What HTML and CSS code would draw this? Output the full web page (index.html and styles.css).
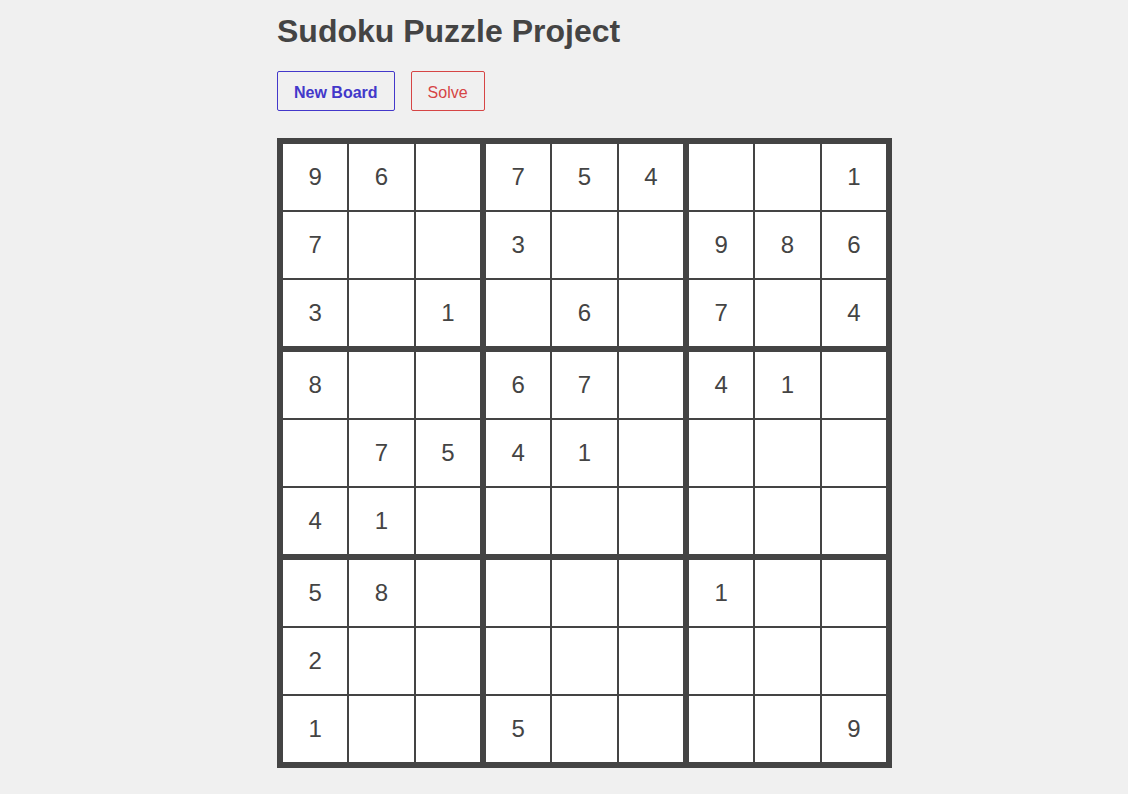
FILE: index.html
```html
<!DOCTYPE html>
<html>
<head>
<meta charset="utf-8">
<title>Sudoku Puzzle Project</title>
<link rel="stylesheet" href="styles.css">
</head>
<body>
<div class="app">
  <h1 class="title">Sudoku Puzzle Project</h1>
  <div class="controls">
    <button class="btn btn-new">New Board</button>
    <button class="btn btn-solve">Solve</button>
  </div>
  <div class="board">
    <div class="block"><div class="cell">9</div><div class="cell">6</div><div class="cell"></div><div class="cell">7</div><div class="cell"></div><div class="cell"></div><div class="cell">3</div><div class="cell"></div><div class="cell">1</div></div>
    <div class="block"><div class="cell">7</div><div class="cell">5</div><div class="cell">4</div><div class="cell">3</div><div class="cell"></div><div class="cell"></div><div class="cell"></div><div class="cell">6</div><div class="cell"></div></div>
    <div class="block"><div class="cell"></div><div class="cell"></div><div class="cell">1</div><div class="cell">9</div><div class="cell">8</div><div class="cell">6</div><div class="cell">7</div><div class="cell"></div><div class="cell">4</div></div>
    <div class="block"><div class="cell">8</div><div class="cell"></div><div class="cell"></div><div class="cell"></div><div class="cell">7</div><div class="cell">5</div><div class="cell">4</div><div class="cell">1</div><div class="cell"></div></div>
    <div class="block"><div class="cell">6</div><div class="cell">7</div><div class="cell"></div><div class="cell">4</div><div class="cell">1</div><div class="cell"></div><div class="cell"></div><div class="cell"></div><div class="cell"></div></div>
    <div class="block"><div class="cell">4</div><div class="cell">1</div><div class="cell"></div><div class="cell"></div><div class="cell"></div><div class="cell"></div><div class="cell"></div><div class="cell"></div><div class="cell"></div></div>
    <div class="block"><div class="cell">5</div><div class="cell">8</div><div class="cell"></div><div class="cell">2</div><div class="cell"></div><div class="cell"></div><div class="cell">1</div><div class="cell"></div><div class="cell"></div></div>
    <div class="block"><div class="cell"></div><div class="cell"></div><div class="cell"></div><div class="cell"></div><div class="cell"></div><div class="cell"></div><div class="cell">5</div><div class="cell"></div><div class="cell"></div></div>
    <div class="block"><div class="cell">1</div><div class="cell"></div><div class="cell"></div><div class="cell"></div><div class="cell"></div><div class="cell"></div><div class="cell"></div><div class="cell"></div><div class="cell">9</div></div>
  </div>
</div>
</body>
</html>
```
FILE: styles.css
```css
html, body {
  margin: 0;
  padding: 0;
  background: #f0f0f0;
}
body {
  font-family: "Liberation Sans", Arial, sans-serif;
  color: #444;
}
.app {
  width: 615px;
  margin: 0 0 0 277px;
  padding-top: 1px;
}
.title {
  font-size: 32px;
  font-weight: bold;
  margin: 12px 0 0;
  line-height: 37px;
  color: #444;
}
.controls {
  display: flex;
  gap: 16px;
  margin-top: 21px;
}
.btn {
  box-sizing: border-box;
  height: 40px;
  padding: 3px 16px 0;
  background: transparent;
  font-family: "Liberation Sans", Arial, sans-serif;
  font-size: 16px;
  border-radius: 2px;
  cursor: pointer;
}
.btn-new {
  border: 1px solid #4338ca;
  color: #4338ca;
  font-weight: bold;
}
.btn-solve {
  border: 1px solid #d64545;
  color: #d64545;
  width: 74px;
}
.board {
  margin-top: 27px;
  width: 615px;
  height: 630px;
  box-sizing: border-box;
  padding: 6px;
  background: #444;
  display: grid;
  grid-template-columns: repeat(3, 1fr);
  grid-template-rows: repeat(3, 1fr);
  gap: 6px;
}
.block {
  display: grid;
  grid-template-columns: repeat(3, 1fr);
  grid-template-rows: repeat(3, 1fr);
  gap: 2px;
}
.cell {
  background: #fff;
  display: flex;
  align-items: center;
  justify-content: center;
  font-size: 24px;
  color: #444;
}
```
